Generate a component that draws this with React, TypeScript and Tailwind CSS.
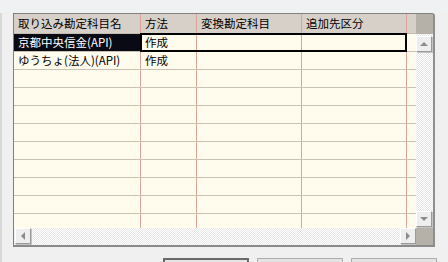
import React from "react";

type Row = { source: string; method: string; target: string; section: string };

const rows: Row[] = [
  { source: "京都中央信金(API)", method: "作成", target: "", section: "" },
  { source: "ゆうちょ(法人)(API)", method: "作成", target: "", section: "" },
  ...Array.from({ length: 9 }, () => ({ source: "", method: "", target: "", section: "" })),
];

const columns = [
  { label: "取り込み勘定科目名", width: "w-[127px]" },
  { label: "方法", width: "w-[56px]" },
  { label: "変換勘定科目", width: "w-[105px]" },
  { label: "追加先区分", width: "w-[105px]" },
];

const checker =
  "bg-[repeating-conic-gradient(#e6e6e6_0%_25%,#ffffff_0%_50%)] bg-[length:2px_2px]";

const ScrollButton = ({ dir }: { dir: "up" | "down" | "left" | "right" }) => {
  const tri: Record<string, string> = {
    up: "border-l-[4px] border-r-[4px] border-b-[4px] border-l-transparent border-r-transparent border-b-[#8c8c8c]",
    down: "border-l-[4px] border-r-[4px] border-t-[4px] border-l-transparent border-r-transparent border-t-[#8c8c8c]",
    left: "border-t-[4px] border-b-[4px] border-r-[4px] border-t-transparent border-b-transparent border-r-[#8c8c8c]",
    right: "border-t-[4px] border-b-[4px] border-l-[4px] border-t-transparent border-b-transparent border-l-[#8c8c8c]",
  };
  return (
    <div className="w-[16px] h-[16px] flex items-center justify-center bg-[#eeeeee] border border-t-white border-l-white border-r-[#9a9a9a] border-b-[#9a9a9a] shadow-[1px_1px_0_#c4c4c4]">
      <div className={`w-0 h-0 ${tri[dir]}`} />
    </div>
  );
};

const Cell = ({ width, children, className = "" }: { width: string; children?: React.ReactNode; className?: string }) => (
  <div className={`${width} shrink-0 h-full border-r border-[#dca597] pl-[4px] flex items-center whitespace-nowrap overflow-hidden ${className}`}>
    {children}
  </div>
);

export default function App() {
  return (
    <div
      className="w-[448px] h-[262px] bg-[#f0f0f0] overflow-hidden text-[11.5px] text-black leading-none"
      style={{ fontFamily: '"Noto Sans CJK JP", "Noto Sans", sans-serif' }}
    >
      <div className="h-[13px] bg-[#eff1f3]" />
      <div className="flex">
        <div className="w-[2px] h-[249px] bg-[#d9d9d9]" />
        <div className="pl-[11px]">
          {/* grid frame */}
          <div className="w-[422px] h-[234px] border border-[#808080] border-r-2 border-b-2 border-r-[#8f8f8f] border-b-[#8a8a8a] rounded-tr-[3px] flex flex-col bg-[#fffbed]">
            <div className="flex h-[214px]">
              <div className="w-[402px] overflow-hidden">
                {/* header */}
                <div className="h-[20px] bg-[#d7d0c8] border-b border-[#c4bcb0] flex">
                  {columns.map((c) => (
                    <Cell key={c.label} width={c.width}>
                      {c.label}
                    </Cell>
                  ))}
                </div>
                {rows.map((r, i) => (
                  <div key={i} className="relative h-[18px] border-b border-[#c9c1b3] flex">
                    <Cell width={columns[0].width} className={i === 0 ? "bg-[#0a0a14] text-white" : ""}>
                      {r.source}
                    </Cell>
                    <Cell width={columns[1].width}>{r.method}</Cell>
                    <Cell width={columns[2].width}>{r.target}</Cell>
                    <Cell width={columns[3].width}>{r.section}</Cell>
                    {i === 0 && (
                      <div className="absolute left-[126px] top-[-1px] w-[267px] h-[19px] border-2 border-black pointer-events-none" />
                    )}
                  </div>
                ))}
              </div>
              {/* vertical scrollbar */}
              <div className="w-[17px] flex flex-col">
                <div className="h-[20px] bg-[#b5b1a9]" />
                <div className={`flex-1 ${checker} flex flex-col justify-between pt-[2px] pb-[1px]`}>
                  <ScrollButton dir="up" />
                  <ScrollButton dir="down" />
                </div>
              </div>
            </div>
            {/* horizontal scrollbar */}
            <div className="flex h-[17px]">
              <div className={`w-[402px] ${checker} flex justify-between pl-[1px]`}>
                <ScrollButton dir="left" />
                <ScrollButton dir="right" />
              </div>
              <div className="w-[17px] bg-[#b5b1a9]" />
            </div>
          </div>
          {/* dialog buttons */}
          <div className="flex mt-[11px] pl-[150px] gap-[8px]">
            <div className="w-[86px] h-[10px] border-2 border-b-0 border-[#6a6a6a] bg-[#e3e3e3]" />
            <div className="w-[86px] h-[10px] border border-b-0 border-[#adadad] bg-[#e3e3e3]" />
            <div className="w-[86px] h-[10px] border border-b-0 border-[#adadad] bg-[#e3e3e3]" />
          </div>
        </div>
      </div>
    </div>
  );
}
